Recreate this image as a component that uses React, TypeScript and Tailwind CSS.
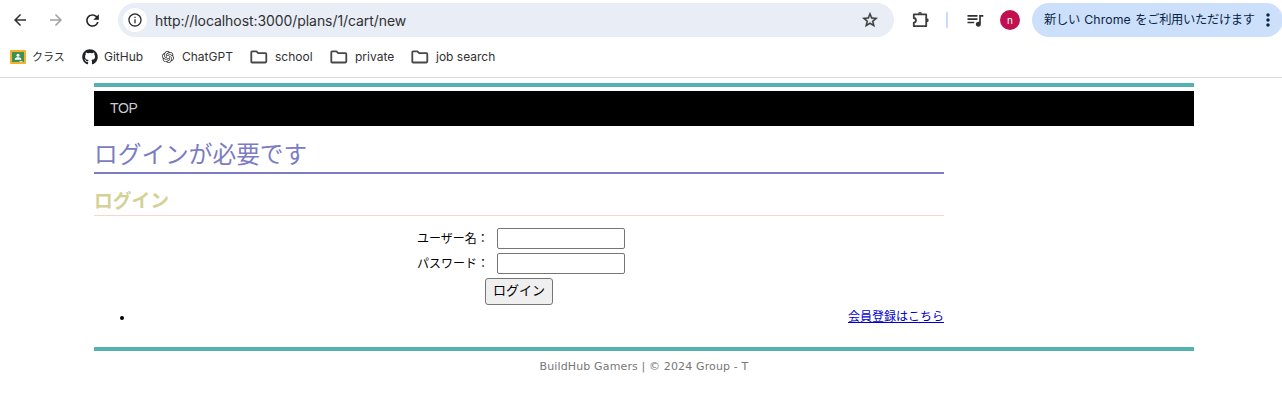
import type { ReactNode } from "react";
import { MdArrowBack, MdArrowForward, MdInfoOutline, MdMoreVert, MdQueueMusic, MdRefresh, MdStarOutline } from "react-icons/md";
import { FaGithub } from "react-icons/fa";
import { SiOpenai } from "react-icons/si";

function FolderIcon() {
  return (
    <svg width="18" height="14" viewBox="0 0 18 14" fill="none" stroke="#474747" strokeWidth="1.8" strokeLinejoin="round">
      <path d="M1.3 2.2Q1.3 1.3 2.2 1.3H6.4L8.2 3.1H15.4Q16.3 3.1 16.3 4V11.6Q16.3 12.5 15.4 12.5H2.2Q1.3 12.5 1.3 11.6Z" />
    </svg>
  );
}

function ClassroomIcon() {
  return (
    <svg width="16" height="14" viewBox="0 0 16 14">
      <rect width="16" height="14" rx="1" fill="#f6b02c" />
      <rect x="2" y="2" width="12" height="10" fill="#3f9153" />
      <circle cx="8" cy="5.3" r="1.5" fill="#fff" />
      <path d="M4.8 9.7V9C4.8 7.8 6.8 7.3 8 7.3S11.2 7.8 11.2 9V9.7Z" fill="#fff" />
      <rect x="9.5" y="11" width="3" height="1" fill="#dbe8dd" />
    </svg>
  );
}

function ExtensionIcon() {
  return (
    <svg className="ml-[17px] shrink-0" width="20" height="20" viewBox="0 0 20 20">
      <path
        d="M2.8 4.4H15.2V16.2H2.8V12.6C5.7 12.3 5.7 8.3 2.8 8Z"
        fill="none"
        stroke="#3c3c3c"
        strokeWidth="1.8"
        strokeLinejoin="round"
      />
      <path d="M7 3.8A2 1.9 0 0 1 11 3.8ZM15.8 8.3A1.9 2 0 0 1 15.8 12.3Z" fill="#3c3c3c" />
    </svg>
  );
}

function Bookmark({ icon, className, children }: { icon: ReactNode; className: string; children: string }) {
  return (
    <div className={`flex shrink-0 items-center whitespace-nowrap ${className}`}>
      {icon}
      <span>{children}</span>
    </div>
  );
}

function Field({ label, type, id }: { label: string; type: string; id: string }) {
  return (
    <div className="flex h-[21px] items-center">
      <label htmlFor={id} className="w-20 whitespace-nowrap text-xs">{label}</label>
      <input id={id} type={type} className="h-[21px] w-32 rounded-[2px] border border-[#767676] bg-white px-1 text-xs" />
    </div>
  );
}

export default function App() {
  return (
    <div className="h-[403px] w-[1282px] overflow-hidden bg-white font-['Liberation_Sans','Noto_Sans_CJK_JP',sans-serif] text-black">
      <header className="h-[78px] border-b border-[#dcdcdc] font-['Inter','Noto_Sans_CJK_JP',sans-serif] text-[#303133]">
        <div className="flex h-10 items-center">
          <div className="flex w-[118px] shrink-0 items-center gap-[18px] pl-[11px]">
            <MdArrowBack size={18} color="#303030" />
            <MdArrowForward size={18} color="#a0a0a0" />
            <MdRefresh size={19} className="-mr-px" color="#202020" />
          </div>
          <div className="flex h-[34px] w-[776px] shrink-0 items-center rounded-full bg-[#e9edf6] pl-[5px] pr-[15px]">
            <span className="flex size-6 items-center justify-center rounded-full bg-white">
              <MdInfoOutline size={16} color="#303030" />
            </span>
            <span className="ml-2 flex-1 text-[14px] tracking-[-0.07px]">http://localhost:3000/plans/1/cart/new</span>
            <MdStarOutline size={18} className="stroke-[#3c3c3c] stroke-[0.6px] text-[#3c3c3c]" />
          </div>
          <ExtensionIcon />
          <span className="ml-[15px] h-4 w-[2px] shrink-0 bg-[#c5dcfa]" />
          <MdQueueMusic className="-mt-px ml-[17px] shrink-0" size={20} color="#303030" />
          <span className="ml-[15px] flex size-5 shrink-0 items-center justify-center rounded-full bg-[#c2104e] text-[10px] text-white">n</span>
          <div className="ml-3 flex h-[34px] w-[251px] shrink-0 items-center rounded-full bg-[#cce0fc] pl-3 text-[12.3px] text-[#0a2442]">
            <span className="w-[214px] whitespace-nowrap pt-px tracking-[-0.35px] [word-spacing:1.3px]">
              新しい <span className="tracking-[0.1px]">Chrome</span> をご利用いただけます
            </span>
            <MdMoreVert size={20} />
          </div>
        </div>
        <nav className="flex h-[34px] items-center pl-[10px] text-[12px]">
          <Bookmark className="w-[72px] gap-[6px] text-[11px]" icon={<ClassroomIcon />}>クラス</Bookmark>
          <Bookmark className="w-20 gap-[6px]" icon={<FaGithub size={16} color="#1f2328" />}>GitHub</Bookmark>
          <Bookmark className="w-[88px] gap-2" icon={<SiOpenai size={12} color="#303030" />}>ChatGPT</Bookmark>
          <Bookmark className="w-20 gap-[7px]" icon={<FolderIcon />}>school</Bookmark>
          <Bookmark className="w-[81px] gap-[7px]" icon={<FolderIcon />}>private</Bookmark>
          <Bookmark className="gap-[7px]" icon={<FolderIcon />}>job search</Bookmark>
        </nav>
      </header>

      <div className="ml-[94px] w-[1100px] pt-[5px]">
        <div className="h-1 bg-[#56b2b2]" />
        <nav className="mt-1 flex h-[35px] items-center bg-black pl-4 text-[14px] tracking-[-0.3px] text-[#cccccc]">
          <a href="#top">TOP</a>
        </nav>
        <main className="w-[850px]">
          <h1 className="flex h-12 items-center border-b-2 border-[#7b7cc4] pt-[13px] text-[23.7px] text-[#7b7cc4]">ログインが必要です</h1>
          <h2 className="flex h-[42px] items-center border-b border-[#fad5c8] pt-[15px] text-[18.8px] font-bold text-[#d5d196]">ログイン</h2>
          <form className="flex h-[89px] flex-col items-center gap-1 pt-3">
            <div className="flex flex-col gap-1 pl-1">
              <Field label="ユーザー名：" type="text" id="username" />
              <Field label="パスワード：" type="password" id="password" />
            </div>
            <button type="button" className="h-[27px] w-[68px] rounded-[3px] border border-[#767676] bg-[#efefef] pb-[2px] text-[13px] leading-none">ログイン</button>
          </form>
          <ul className="h-[42px] list-disc pl-10 text-xs">
            <li className="h-6 leading-6">
              <a href="#register" className="float-right text-[#0000cc] underline">会員登録はこちら</a>
            </li>
          </ul>
        </main>
        <footer className="border-t-4 border-[#56b2b2] pt-2 text-center font-['DejaVu_Sans',sans-serif] text-[11px] leading-4 tracking-[0.14px] text-[#777777]">
          BuildHub Gamers | © 2024 Group - T
        </footer>
      </div>
    </div>
  );
}
